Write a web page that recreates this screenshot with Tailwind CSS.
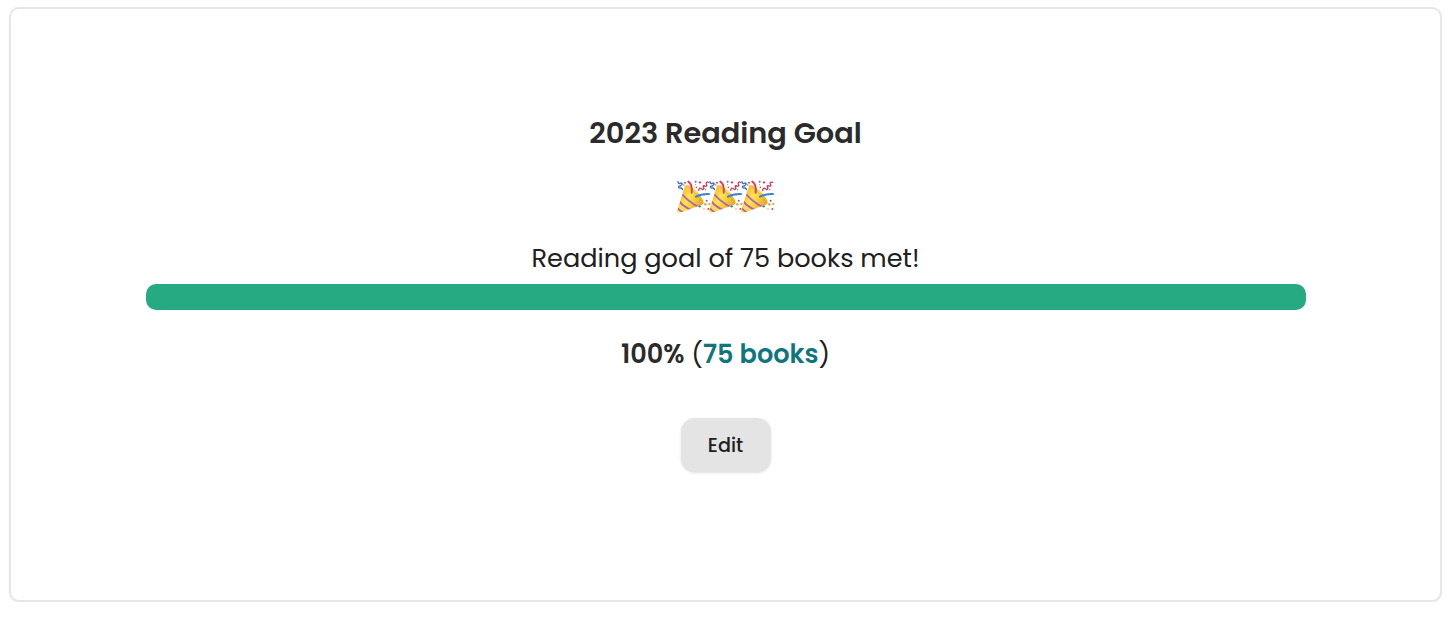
<!DOCTYPE html>
<html lang="en">
<head>
  <meta charset="UTF-8" />
  <meta name="viewport" content="width=device-width, initial-scale=1.0" />
  <title>2023 Reading Goal</title>
  <script src="https://cdn.jsdelivr.net/npm/@tailwindcss/browser@4"></script>
</head>
<body class="bg-white font-['Poppins','Inter',sans-serif] text-[#202020]">

<!-- Party popper, reused below -->
<svg class="absolute size-0" aria-hidden="true">
  <defs>
    <linearGradient id="cone" x1="0" y1="0" x2="1" y2="0.6">
      <stop offset="0" stop-color="#e9a32c" />
      <stop offset="0.3" stop-color="#f6c534" />
      <stop offset="0.5" stop-color="#ffe552" />
      <stop offset="1" stop-color="#e8a820" />
    </linearGradient>
    <clipPath id="coneClip"><path d="M10 103 L33 30 Q37 24 46 29 Q74 45 88 74 Q91 82 84 86 L17 110 Q8 112 10 103Z" /></clipPath>
  </defs>
  <symbol id="popper" viewBox="0 0 120 120">
    <path d="M10 103 L33 30 Q37 24 46 29 Q74 45 88 74 Q91 82 84 86 L17 110 Q8 112 10 103Z" fill="url(#cone)" />
    <g clip-path="url(#coneClip)" fill="none" stroke="#b560b4" stroke-width="5.5">
      <path d="M24 54 Q40 74 74 94" />
      <path d="M16 76 Q28 92 54 103" />
      <path d="M8 94 Q16 104 30 110" />
    </g>
    <path d="M42 33 Q64 46 82 76" fill="none" stroke="#d99a24" stroke-width="3" opacity="0.5" />
    <g fill="none" stroke-linecap="round">
      <path d="M53 50 Q56 26 43 17" stroke="#e63c62" stroke-width="6" />
      <path d="M66 62 Q82 53 105 54" stroke="#3b82d0" stroke-width="6" />
      <path d="M12 17 Q13 25 19 22 Q26 19 24 26 Q20 31 14 31 Q12 37 20 36 Q26 36 25 41" stroke="#3070c8" stroke-width="4" />
      <path d="M74 43 Q76 33 82 38 Q87 44 90 37 Q84 27 93 30 Q101 32 97 24 Q95 17 104 19" stroke="#cc385f" stroke-width="4" />
    </g>
    <g fill="#e04468">
      <circle cx="33" cy="20" r="3" /><circle cx="78" cy="19" r="3.5" /><circle cx="67" cy="34" r="2.5" /><circle cx="103" cy="99" r="3" />
    </g>
    <g fill="#3c78c4">
      <circle cx="65" cy="17" r="3" /><circle cx="77" cy="91" r="3.5" /><circle cx="98" cy="74" r="3" /><circle cx="95" cy="41" r="2" />
    </g>
    <g fill="#e8a64c">
      <circle cx="29" cy="26" r="3" /><circle cx="94" cy="85" r="4" /><circle cx="106" cy="84" r="3.5" /><circle cx="64" cy="26" r="2" /><circle cx="90" cy="99" r="2.5" />
    </g>
  </symbol>
</svg>

<main class="px-[9px] pt-[7px]">
  <section class="flex h-[595px] w-[1433px] flex-col items-center rounded-[10px] border-2 border-[#e6e6e6] bg-white pt-[106px] shadow-xs">
    <h2 class="h-9 text-[28.8px] leading-9 font-semibold whitespace-nowrap text-[#2b2b2b]">2023 Reading Goal</h2>

    <div class="mt-[25px] flex h-10 w-[97px]" role="img" aria-label="Celebration">
      <svg class="-ml-[3px] size-10 shrink-0"><use href="#popper" /></svg>
      <svg class="-ml-2 size-10 shrink-0"><use href="#popper" /></svg>
      <svg class="-ml-2 size-10 shrink-0"><use href="#popper" /></svg>
    </div>

    <p class="mt-[22px] h-10 text-[25.6px] leading-10 whitespace-nowrap">Reading goal of 75 books met!</p>

    <div class="mt-[6px] h-[26px] w-[1160px] overflow-hidden rounded-[10px] bg-gray-200">
      <div class="h-full bg-[#26aa82]" style="width: 100%"></div>
    </div>

    <p class="mt-[24px] h-10 text-[25.6px] leading-10 whitespace-nowrap">
      <span class="font-semibold text-[#2b2b2b]">100%</span>
      (<a href="#" class="font-semibold text-[#0f767d]">75 books</a>)
    </p>

    <button class="mt-[44px] h-[54px] w-[90px] rounded-[14px] bg-[#e4e4e4] pt-[2px] text-[19.2px] font-medium shadow-sm">Edit</button>
  </section>
</main>

</body>
</html>
